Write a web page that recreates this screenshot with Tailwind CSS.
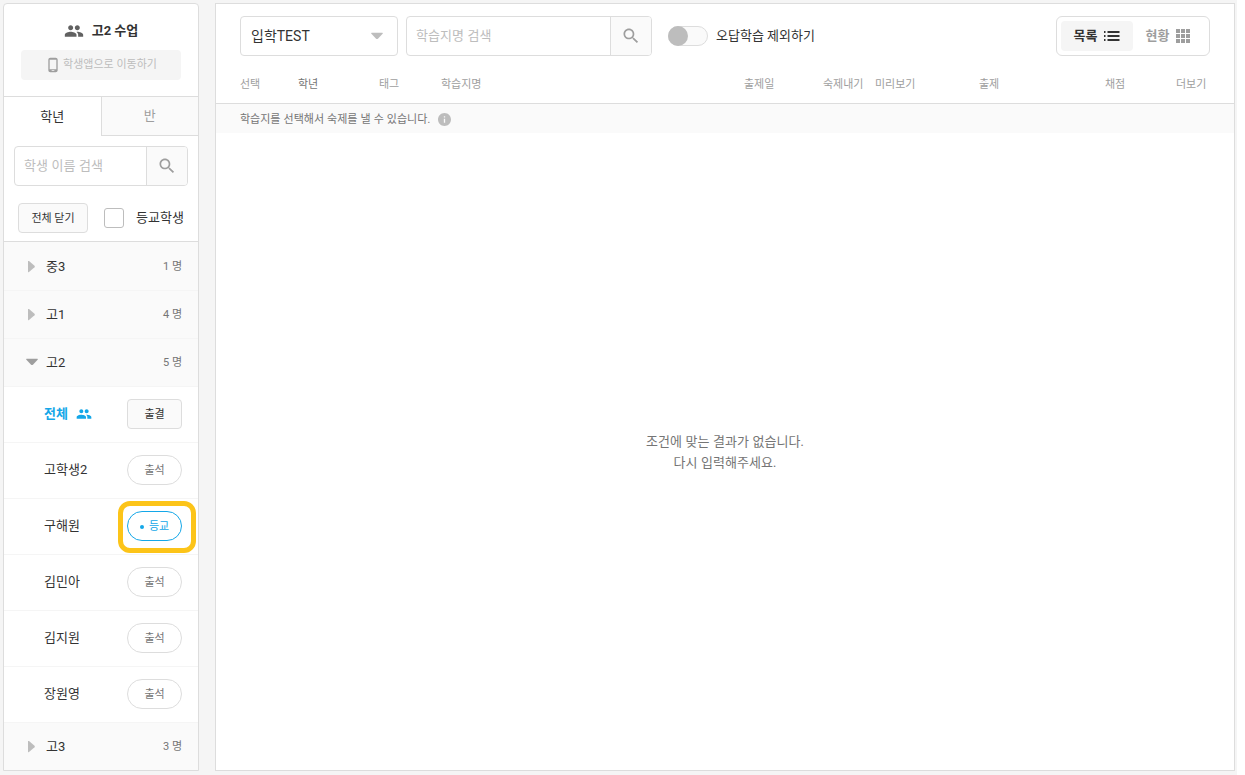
<!DOCTYPE html>
<html lang="ko">
<head>
  <meta charset="UTF-8">
  <meta name="viewport" content="width=device-width, initial-scale=1.0">
  <title>고2 수업</title>
  <script src="https://cdn.jsdelivr.net/npm/@tailwindcss/browser@4"></script>
</head>
<body class="bg-white font-[Roboto,'Noto_Sans_CJK_KR',sans-serif] text-[13px] leading-5 text-[#333]">
  <!-- shared icons -->
  <svg class="hidden">
    <symbol id="people" viewBox="0 0 24 24"><path d="M16 11c1.66 0 2.99-1.34 2.99-3S17.66 5 16 5c-1.66 0-3 1.34-3 3s1.34 3 3 3zm-8 0c1.66 0 2.99-1.34 2.99-3S9.66 5 8 5C6.34 5 5 6.34 5 8s1.34 3 3 3zm0 2c-2.33 0-7 1.17-7 3.5V19h14v-2.5c0-2.33-4.67-3.5-7-3.5zm8 0c-.29 0-.62.02-.97.05 1.16.84 1.97 1.97 1.97 3.45V19h6v-2.5c0-2.33-4.67-3.5-7-3.5z"/></symbol>
    <symbol id="phone" viewBox="0 0 24 24"><path d="M16 1H8C6.340 1 5 2.340 5 4v16c0 1.660 1.340 3 3 3h8c1.660 0 3-1.340 3-3V4c0-1.660-1.340-3-3-3zm-2 20h-4v-1h4v1zm3-2.500H7V4h10v14.500z"/></symbol>
    <symbol id="search" viewBox="0 0 24 24"><path d="M15.5 14h-.79l-.28-.27C15.41 12.59 16 11.11 16 9.5 16 5.91 13.09 3 9.5 3S3 5.91 3 9.5 5.91 16 9.5 16c1.61 0 3.09-.59 4.23-1.57l.27.28v.79l5 4.99L20.49 19l-4.99-5zm-6 0C7.01 14 5 11.99 5 9.5S7.01 5 9.5 5 14 7.01 14 9.5 11.99 14 9.5 14z"/></symbol>
    <symbol id="right" viewBox="0 0 12 12"><path d="M2 .5v10q0 1 1 .4L8.500 6.200q.7-.7 0-1.400L3 .1q-1-.6-1 .4z"/></symbol>
    <symbol id="down" viewBox="0 0 12 12"><path d="M.8 1.800h10.400q1.200 0 .4.900L6.900 7.700q-.9.800-1.800 0L.4 2.700q-.8-.9.400-.9z"/></symbol>
    <symbol id="list" viewBox="0 0 16 12"><path d="M0 1h1.500v2H0zM3.500 1h12v2h-12zM0 5h1.500v2H0zM3.500 5h12v2h-12zM0 9h1.500v2H0zM3.500 9h12v2h-12z"/></symbol>
    <symbol id="grid" viewBox="0 0 14 14"><path d="M0 0h4v4H0zM5 0h4v4H5zM10 0h4v4h-4zM0 5h4v4H0zM5 5h4v4H5zM10 5h4v4h-4zM0 10h4v4H0zM5 10h4v4H5zM10 10h4v4h-4z"/></symbol>
    <symbol id="info" viewBox="2 2 20 20"><path d="M12 2C6.480 2 2 6.480 2 12s4.480 10 10 10 10-4.480 10-10S17.520 2 12 2zm1 15h-2v-6h2v6zm0-8h-2V7h2v2z"/></symbol>
  </svg>

  <div class="mr-2 flex min-h-screen gap-4 bg-[#f5f5f5] pt-[3px] pr-0.5 pb-1 pl-[3px]">
    <aside class="w-[196px] shrink-0 rounded-t border border-[#ddd] bg-white">
      <div class="px-4 pt-[17px] pb-4">
        <h1 class="flex items-center justify-center gap-2 font-bold">
          <svg class="size-5 fill-[#616161]"><use href="#people"/></svg>
          고2 수업
        </h1>
        <button class="mx-auto mt-[9px] flex h-[30px] w-40 items-center justify-center gap-0.5 rounded bg-[#f5f5f5] text-[11px] leading-4 text-[#bdbdbd]">
          <svg class="size-4 fill-[#9e9e9e]"><use href="#phone"/></svg>
          학생앱으로 이동하기
        </button>
      </div>

      <div class="flex h-10 border-t border-[#ddd]">
        <button class="flex-1">학년</button>
        <button class="flex-1 border-b border-l border-[#ddd] bg-[#fafafa] text-[#9e9e9e]">반</button>
      </div>

      <div class="border-b border-[#ddd] px-2.5 pt-2.5 pb-2">
        <div class="flex h-10 overflow-hidden rounded border border-[#ddd]">
          <input type="text" aria-label="학생 이름 검색" placeholder="학생 이름 검색" class="min-w-0 flex-1 px-[9px] font-['Liberation_Sans','Noto_Sans_CJK_KR',sans-serif] outline-none placeholder:text-[#bdbdbd]">
          <button aria-label="검색" class="flex w-[41px] items-center justify-center border-l border-[#ddd] bg-[#fafafa]">
            <svg class="size-5 fill-[#9e9e9e]"><use href="#search"/></svg>
          </button>
        </div>
        <div class="mt-[17px] flex items-center px-1">
          <button class="h-[30px] w-[70px] rounded border border-[#ddd] bg-[#fafafa] pt-0.5 text-[11px]">전체 닫기</button>
          <input type="checkbox" id="attend" class="ml-4 size-5 appearance-none rounded-[3px] border border-[#bdbdbd] bg-white checked:bg-[#14a7e8]">
          <label for="attend" class="ml-3 whitespace-nowrap">등교학생</label>
        </div>
      </div>

      <div class="bg-[#fafafa] pt-px">
        <button class="flex h-12 w-full items-center border-b border-[#f5f5f5] pr-4 pl-[22px]">
          <svg class="mr-2 size-3 fill-[#bdbdbd]"><use href="#right"/></svg>중3
          <span class="ml-auto text-[11px] text-[#757575]">1 명</span>
        </button>
        <button class="flex h-12 w-full items-center border-b border-[#f5f5f5] pr-4 pl-[22px]">
          <svg class="mr-2 size-3 fill-[#bdbdbd]"><use href="#right"/></svg>고1
          <span class="ml-auto text-[11px] text-[#757575]">4 명</span>
        </button>
        <button class="flex h-12 w-full items-center border-b border-[#f5f5f5] pr-4 pl-[22px]">
          <svg class="mr-2 size-3 fill-[#9e9e9e]"><use href="#down"/></svg>고2
          <span class="ml-auto text-[11px] text-[#757575]">5 명</span>
        </button>

        <ul class="bg-white">
          <li class="flex items-center justify-between border-b border-[#f5f5f5] pt-3 pr-4 pb-[13px] pl-10">
            <a href="#" class="flex items-center gap-2 font-bold text-[#14a7e8]">전체 <svg class="size-4 fill-current"><use href="#people"/></svg></a>
            <button class="h-[30px] w-[55px] rounded border border-[#ddd] bg-[#fafafa] pt-0.5 text-[11px]">출결</button>
          </li>
          <li class="flex items-center justify-between border-b border-[#f5f5f5] pt-3 pr-4 pb-[13px] pl-10">
            고학생2
            <button class="h-[30px] w-[55px] rounded-full border border-[#ddd] pt-0.5 text-[11px] text-[#757575]">출석</button>
          </li>
          <li class="flex items-center justify-between border-b border-[#f5f5f5] pt-3 pr-4 pb-[13px] pl-10">
            구해원
            <div class="relative">
              <button class="flex h-[30px] w-[55px] items-center justify-center gap-[5px] rounded-full border border-[#14a7e8] pt-0.5 text-[11px] text-[#14a7e8]"><i class="size-1 rounded-full bg-current"></i>등교</button>
              <div class="pointer-events-none absolute -top-2.5 -right-3.5 -bottom-3 -left-[9px] rounded-xl border-5 border-[#fcc419]"></div>
            </div>
          </li>
          <li class="flex items-center justify-between border-b border-[#f5f5f5] pt-3 pr-4 pb-[13px] pl-10">
            김민아
            <button class="h-[30px] w-[55px] rounded-full border border-[#ddd] pt-0.5 text-[11px] text-[#757575]">출석</button>
          </li>
          <li class="flex items-center justify-between border-b border-[#f5f5f5] pt-3 pr-4 pb-[13px] pl-10">
            김지원
            <button class="h-[30px] w-[55px] rounded-full border border-[#ddd] pt-0.5 text-[11px] text-[#757575]">출석</button>
          </li>
          <li class="flex items-center justify-between border-b border-[#f5f5f5] pt-3 pr-4 pb-[13px] pl-10">
            장원영
            <button class="h-[30px] w-[55px] rounded-full border border-[#ddd] pt-0.5 text-[11px] text-[#757575]">출석</button>
          </li>
        </ul>

        <button class="flex h-[47px] w-full items-center pr-4 pl-[22px]">
          <svg class="mr-2 size-3 fill-[#bdbdbd]"><use href="#right"/></svg>고3
          <span class="ml-auto text-[11px] text-[#757575]">3 명</span>
        </button>
      </div>
    </aside>

    <main class="flex min-w-0 flex-1 flex-col border border-[#ddd] bg-white">
      <div class="flex items-center px-6 pt-3 pb-2">
        <div class="relative">
          <select aria-label="태그" class="h-10 w-[158px] appearance-none rounded border border-[#ddd] px-2.5 text-sm">
            <option>입학TEST</option>
          </select>
          <svg class="pointer-events-none absolute top-[15px] right-[15px] size-3 fill-[#bdbdbd]"><use href="#down"/></svg>
        </div>
        <div class="ml-2 flex h-10 w-[246px] overflow-hidden rounded border border-[#ddd]">
          <input type="text" aria-label="학습지명 검색" placeholder="학습지명 검색" class="min-w-0 flex-1 px-[9px] font-['Liberation_Sans','Noto_Sans_CJK_KR',sans-serif] outline-none placeholder:text-[#bdbdbd]">
          <button aria-label="검색" class="flex w-[41px] items-center justify-center border-l border-[#ddd] bg-[#fafafa]">
            <svg class="size-5 fill-[#9e9e9e]"><use href="#search"/></svg>
          </button>
        </div>
        <label class="ml-4 flex items-center gap-2">
          <input type="checkbox" class="peer sr-only">
          <span class="h-5 w-10 rounded-full border border-[#ddd] bg-[#fafafa]"><span class="-mt-px -ml-px block size-5 rounded-full bg-[#bdbdbd]"></span></span>
          오답학습 제외하기
        </label>
        <div class="ml-auto flex h-10 w-[154px] rounded-md border border-[#ddd] p-1 font-bold">
          <button class="flex w-[72px] items-center justify-center gap-[7px] rounded bg-[#f5f5f5]">목록 <svg class="h-3 w-4 fill-current"><use href="#list"/></svg></button>
          <button class="flex w-[70px] items-center justify-center gap-[7px] text-[#9e9e9e]">현황 <svg class="size-3.5 fill-current"><use href="#grid"/></svg></button>
        </div>
      </div>

      <table class="w-full table-fixed text-left text-[11px] leading-4">
        <colgroup>
          <col class="w-[82px]"><col class="w-[81px]"><col class="w-[62px]"><col>
          <col class="w-[79px]"><col class="w-[52px]"><col class="w-[104px]"><col class="w-[126px]"><col class="w-[71px]"><col class="w-[58px]">
        </colgroup>
        <thead>
          <tr class="h-[39px] border-b border-[#ddd] whitespace-nowrap text-[#9e9e9e] *:pt-1 *:font-normal">
            <th class="pl-6">선택</th>
            <th class="text-[#757575]">학년</th>
            <th>태그</th>
            <th>학습지명</th>
            <th>출제일</th>
            <th>숙제내기</th>
            <th>미리보기</th>
            <th>출제</th>
            <th>채점</th>
            <th>더보기</th>
          </tr>
        </thead>
        <tbody>
          <tr class="h-[30px] bg-[#fafafa] text-[#757575]">
            <td colspan="10" class="pt-0.5 pl-6">
              <div class="flex items-center gap-2 font-['Liberation_Sans','Noto_Sans_CJK_KR',sans-serif]">학습지를 선택해서 숙제를 낼 수 있습니다. <svg class="size-[13px] fill-[#bdbdbd]"><use href="#info"/></svg></div>
            </td>
          </tr>
        </tbody>
      </table>

      <div class="flex flex-1 items-center justify-center text-center font-['Liberation_Sans','Noto_Sans_CJK_KR',sans-serif] leading-[21px] text-[#757575]">
        <p>조건에 맞는 결과가 없습니다.<br>다시 입력해주세요.</p>
      </div>
    </main>
  </div>
</body>
</html>
